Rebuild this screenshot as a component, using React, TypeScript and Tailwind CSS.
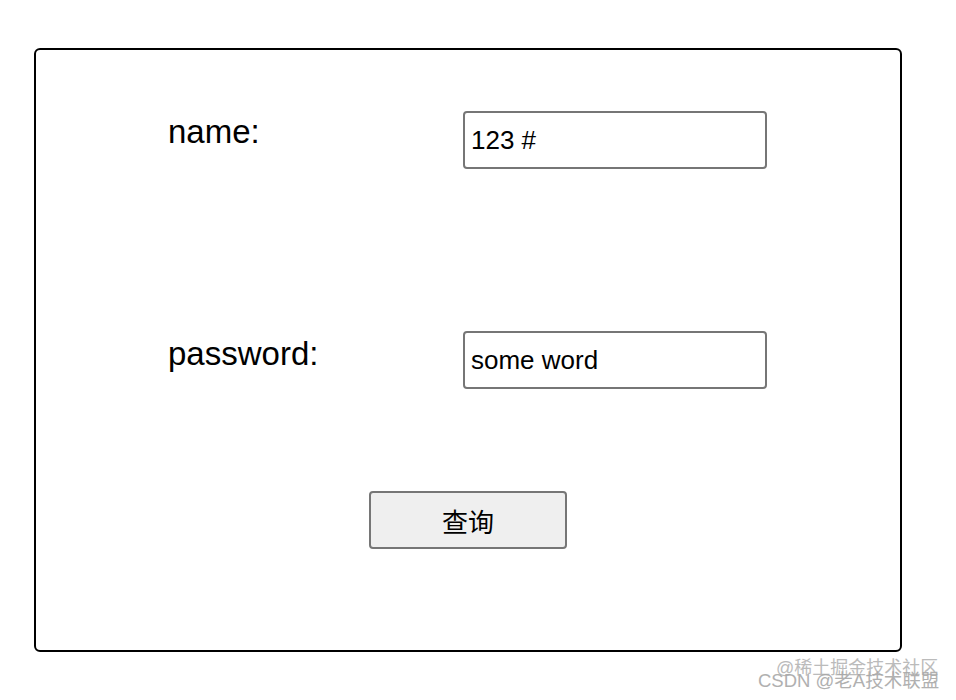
import React from 'react';

const sans = { fontFamily: '"Liberation Sans", Arial, "Noto Sans CJK SC", sans-serif' };

export default function App() {
  return (
    <div className="relative h-[700px] w-[956px] overflow-hidden bg-white pt-[48px] pl-[34px] text-black" style={sans}>
      <form className="h-[604px] w-[868px] rounded-md border-2 border-black pt-[61px]">
        <div className="flex items-start pl-[132px]">
          <label className="mt-[2px] w-[295px] text-[33px] leading-[38px]">name:</label>
          <input
            defaultValue="123 #"
            className="h-[58px] w-[304px] rounded border-2 border-[#767676] px-[6px] text-[26px] outline-none"
          />
        </div>
        <div className="mt-[162px] flex items-start pl-[132px]">
          <label className="mt-[4px] w-[295px] text-[33px] leading-[38px]">password:</label>
          <input
            defaultValue="some word"
            className="h-[58px] w-[304px] rounded border-2 border-[#767676] px-[6px] text-[26px] outline-none"
          />
        </div>
        <div className="mt-[102px] flex justify-center">
          <button
            type="button"
            className="h-[58px] w-[198px] rounded border-2 border-[#767676] bg-[#efefef] text-[26px]"
            style={{ fontFamily: '"Noto Sans CJK SC", sans-serif' }}
          >
            查询
          </button>
        </div>
      </form>

      {/* watermark */}
      <div className="pointer-events-none absolute left-[776px] top-[659px] whitespace-nowrap text-[18px] leading-none text-[#b4b4b4] opacity-90">
        @稀土掘金技术社区
      </div>
      <div className="pointer-events-none absolute left-[758px] top-[672px] whitespace-nowrap text-[18.5px] leading-none text-[#a8a8a8] opacity-90">
        CSDN @老A技术联盟
      </div>
    </div>
  );
}
